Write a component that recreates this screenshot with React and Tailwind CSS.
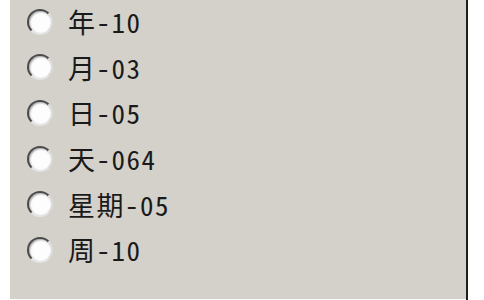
import React from "react";

const items = ["年-10", "月-03", "日-05", "天-064", "星期-05", "周-10"];

function Radio() {
  return (
    <div className="w-[26px] h-[26px] shrink-0 rounded-full border-[2px] border-t-[#4a4a4a] border-l-[#4a4a4a] border-r-[#dcdcdc] border-b-[#e4e4e4] bg-[#fdfdfd] shadow-[inset_1px_1px_2px_rgba(0,0,0,0.35)]" />
  );
}

export default function App() {
  return (
    <div className="w-[484px] h-[300px] bg-white flex overflow-hidden">
      <div className="w-[10px] shrink-0 bg-white" />
      <div className="w-[456px] h-full bg-[#d4d1cb] flex flex-col -mt-[1px]">
        {items.map((t) => (
          <div key={t} className="h-[45.6px] shrink-0 flex items-center pl-[17px] gap-[15px]">
            <Radio />
            <span
              className="text-[27px] leading-none text-[#1a1a1a] tracking-[1.5px] [font-feature-settings:'hwid']"
              style={{ fontFamily: '"Noto Sans CJK SC", sans-serif' }}
            >
              {t}
            </span>
          </div>
        ))}
      </div>
      <div className="w-[2px] shrink-0 bg-[#1e1e1e]" />
      <div className="flex-1 bg-white" />
    </div>
  );
}
